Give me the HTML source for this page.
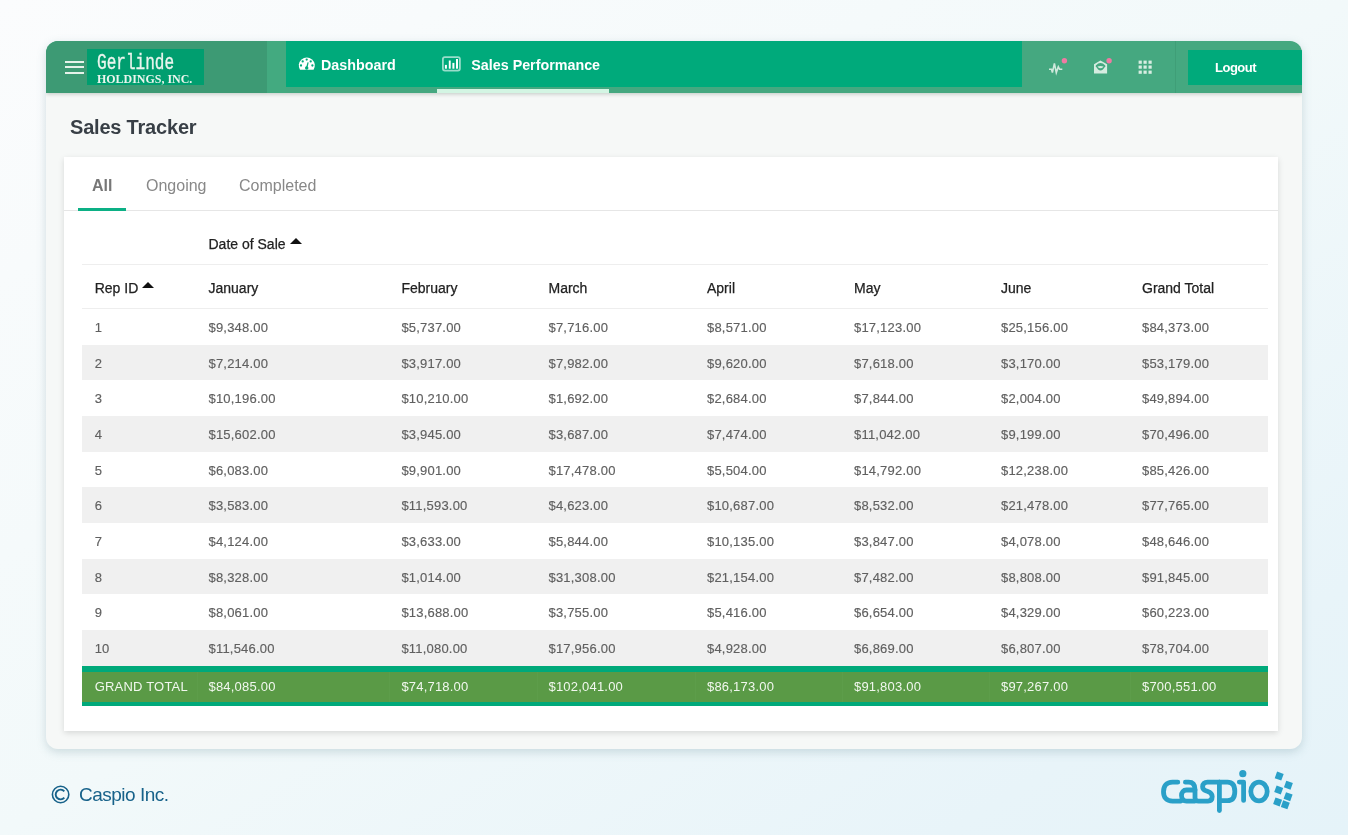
<!DOCTYPE html>
<html><head><meta charset="utf-8">
<style>
*{margin:0;padding:0;box-sizing:border-box}
html,body{width:1348px;height:835px;overflow:hidden}
body{font-family:"Liberation Sans",sans-serif;position:relative;
 background:linear-gradient(to bottom right,#fbfcfd 0%,#f2f9fa 50%,#e8f4f9 85%,#e5f3f9 100%);}
.abs{position:absolute}
#card{position:absolute;left:46px;top:41px;width:1256px;height:708px;background:#f6f8f7;border-radius:12px;
 box-shadow:0 3px 10px rgba(100,140,150,0.28);overflow:hidden}
#hdr{position:absolute;left:0;top:0;width:1256px;height:52px;background:#45a880;box-shadow:0 1px 4px rgba(0,30,15,0.22);z-index:2}
#hleft{position:absolute;left:0;top:0;width:220.5px;height:52px;background:#3d9a74}
#hstrip{position:absolute;left:220.5px;top:0;width:19.5px;height:52px;background:#43aa80}
#nav{position:absolute;left:240px;top:0;width:736px;height:46px;background:#00aa7b}
#logo{position:absolute;left:41px;top:8px;width:117px;height:36px;background:#009e6f}
.burger{position:absolute;left:19px;width:19px;height:2px;background:#e6f2ea}
.navt{position:absolute;color:#fff;font-weight:bold;font-size:14.3px;line-height:16px;white-space:nowrap}
#ul{position:absolute;left:390.5px;top:48px;width:172.5px;height:4px;background:#d3f5e3}
#logout{position:absolute;left:1142px;top:9px;width:114px;height:35px;background:#00aa7b;color:#fff;font-weight:bold;font-size:13px;line-height:35px;padding-left:27px;letter-spacing:-0.5px}
#vdiv{position:absolute;left:1129px;top:0;width:1px;height:52px;background:#3f9e77}
.dot{position:absolute;width:6px;height:6px;border-radius:50%;background:#f07aa5}
#title{position:absolute;left:24px;top:75px;font-size:20px;font-weight:bold;color:#383f46;line-height:23px;white-space:nowrap;letter-spacing:-0.2px}
#inner{position:absolute;left:18px;top:116px;width:1214px;height:574px;background:#fff;box-shadow:0 2px 6px rgba(0,0,0,0.13)}
.tab{position:absolute;font-size:16px;line-height:18px;color:#888;white-space:nowrap}
#tabline{position:absolute;left:0;top:53px;width:1214px;height:1px;background:#e6e6e6}
#tabul{position:absolute;left:14px;top:51px;width:48px;height:3px;background:#0cb085}
.th{position:absolute;font-size:14px;line-height:16px;color:#222;white-space:nowrap;-webkit-text-stroke:0.25px #222}
.td{position:absolute;font-size:13px;line-height:15px;color:#606060;white-space:nowrap;letter-spacing:0.2px;-webkit-text-stroke:0.15px #606060}
.tg{position:absolute;font-size:13px;line-height:15px;color:#f1f7ee;white-space:nowrap;letter-spacing:0.2px}
.hline{position:absolute;height:1px;background:#eeeeee}
.band{position:absolute;background:#f0f0f0}
.gt{position:absolute;height:40px;background:#5a9a46;border-top:6px solid #00a97a;border-bottom:4px solid #00a97a}
.gtdiv{position:absolute;width:1px;height:30px;background:#5d9d4a}
.arrow{position:absolute;width:0;height:0;border-left:6.5px solid transparent;border-right:6.5px solid transparent;border-bottom:6.5px solid #111}
#foot{position:absolute;left:79px;top:783.5px;font-size:19px;line-height:22px;color:#17628a;white-space:nowrap;letter-spacing:-0.5px}
</style></head><body>
<div id="root" style="position:absolute;left:0;top:0;width:1348px;height:835px;will-change:transform">
<div id="card">
 <div id="hdr">
  <div id="hleft"></div>
  <div id="hstrip"></div>
  <div class="burger" style="top:19.6px"></div>
  <div class="burger" style="top:25.1px"></div>
  <div class="burger" style="top:30.8px"></div>
  <div id="logo">
   <div style="position:absolute;left:9.5px;top:4.6px;font-family:'Liberation Mono',monospace;font-size:22px;line-height:20px;color:#eaf5ee;font-weight:normal;-webkit-text-stroke:0.35px #eaf5ee;transform:scaleX(0.73);transform-origin:0 0;white-space:nowrap">Gerlinde</div>
   <div style="position:absolute;left:9.5px;top:23px;font-family:'Liberation Serif',serif;font-size:13px;line-height:14px;color:#eaf5ee;font-weight:bold;transform:scaleX(0.92);transform-origin:0 0;white-space:nowrap">HOLDINGS, INC.</div>
  </div>
  <div id="nav">
   <div class="navt" style="left:35px;top:16px">Dashboard</div>
   <div class="navt" style="left:185.3px;top:16px">Sales Performance</div>
  </div>
  <div id="ul"></div>
  <div id="vdiv"></div>

  <svg style="position:absolute;left:0;top:0" width="1256" height="52" viewBox="46 41 1256 52">
   <!-- dashboard gauge -->
   <g transform="translate(298.8,57.1)">
    <path d="M1.2 12.7 A8 8 0 1 1 14.8 12.7 Z" fill="#fff"/>
    <g fill="#00aa7b">
     <circle cx="7.9" cy="2.5" r="1.15"/><circle cx="3.9" cy="4.3" r="1.15"/><circle cx="11.9" cy="4.3" r="1.15"/>
     <circle cx="2.2" cy="8.4" r="1.15"/><circle cx="13.6" cy="8.4" r="1.15"/>
     <circle cx="7.9" cy="10.9" r="1.75"/>
     <path d="M7.2 10.6 L8.7 5.2 L9.9 5.5 L8.6 11 Z"/>
    </g>
   </g>
   <!-- chart icon -->
   <rect x="442.9" y="57.1" width="17" height="13.5" rx="2" ry="2" fill="none" stroke="#fff" stroke-opacity="0.6" stroke-width="1.8"/>
   <g fill="#fff">
    <rect x="444.9" y="64.9" width="2" height="3.8"/>
    <rect x="448.8" y="60.5" width="1.9" height="8.2"/>
    <rect x="452.4" y="62.9" width="2" height="5.8"/>
    <rect x="456" y="59" width="2" height="9.7"/>
   </g>
   <!-- pulse -->
   <path d="M1049 69.2 L1051.5 69.2 L1052.4 72.6 L1054.4 63.3 L1056.3 72.6 L1058.3 66.8 L1059.5 69.2 L1062.3 69.2" fill="none" stroke="#cfe9dc" stroke-width="1.6" stroke-linejoin="miter" stroke-linecap="butt"/>
   <circle cx="1064.4" cy="60.7" r="2.7" fill="#ef7aa3"/>
   <!-- envelope open -->
   <path d="M1094 64.2 L1100.4 60.4 L1107.1 64.2 L1107.1 73.6 L1094 73.6 Z" fill="#d5ece0"/>
   <path d="M1095.8 65.4 Q1100.5 60.6 1105.3 65.4 L1105.3 66.2 Q1100.5 74.6 1095.8 66.2 Z" fill="#45a880"/>
   <path d="M1097.4 66.4 Q1100.5 65.4 1103.6 66.4 Q1100.5 70.2 1097.4 66.4 Z" fill="#d5ece0"/>
   <circle cx="1109.1" cy="60.7" r="2.7" fill="#ef7aa3"/>
   <!-- grid -->
   <g fill="#d8ede2">
    <rect x="1138.6" y="60.6" width="3.2" height="3.2"/><rect x="1143.5" y="60.6" width="3.2" height="3.2"/><rect x="1148.5" y="60.6" width="3.2" height="3.2"/>
    <rect x="1138.6" y="65.5" width="3.2" height="3.2"/><rect x="1143.5" y="65.5" width="3.2" height="3.2"/><rect x="1148.5" y="65.5" width="3.2" height="3.2"/>
    <rect x="1138.6" y="70.6" width="3.2" height="3.2"/><rect x="1143.5" y="70.6" width="3.2" height="3.2"/><rect x="1148.5" y="70.6" width="3.2" height="3.2"/>
   </g>
  </svg>
  <div id="logout">Logout</div>
 </div>
 <div id="title">Sales Tracker</div>
 <div id="inner">
  <div class="tab" style="left:28px;top:20px;font-weight:bold;color:#777">All</div>
  <div class="tab" style="left:82px;top:20px">Ongoing</div>
  <div class="tab" style="left:175px;top:20px">Completed</div>
  <div id="tabline"></div>
  <div id="tabul"></div>
 </div>
</div>
<div id="tbl" style="position:absolute;left:0;top:0;width:1348px;height:835px">
<div class="th" style="left:208.50px;top:236.13px">Date of Sale</div>
<div class="arrow" style="left:290px;top:238px"></div>
<div class="hline" style="left:82px;top:264px;width:1185.5px"></div>
<div class="th" style="left:94.70px;top:280.23px">Rep ID</div>
<div class="th" style="left:208.50px;top:280.23px">January</div>
<div class="th" style="left:401.40px;top:280.23px">February</div>
<div class="th" style="left:548.50px;top:280.23px">March</div>
<div class="th" style="left:707.00px;top:280.23px">April</div>
<div class="th" style="left:854.00px;top:280.23px">May</div>
<div class="th" style="left:1001.00px;top:280.23px">June</div>
<div class="th" style="left:1142.00px;top:280.23px">Grand Total</div>
<div class="arrow" style="left:142.3px;top:281.9px"></div>
<div class="hline" style="left:82px;top:308px;width:1185.5px"></div>
<div class="td" style="left:94.70px;top:319.84px">1</div>
<div class="td" style="left:208.50px;top:319.84px">$9,348.00</div>
<div class="td" style="left:401.40px;top:319.84px">$5,737.00</div>
<div class="td" style="left:548.50px;top:319.84px">$7,716.00</div>
<div class="td" style="left:707.00px;top:319.84px">$8,571.00</div>
<div class="td" style="left:854.00px;top:319.84px">$17,123.00</div>
<div class="td" style="left:1001.00px;top:319.84px">$25,156.00</div>
<div class="td" style="left:1142.00px;top:319.84px">$84,373.00</div>
<div class="band" style="left:82px;top:344.67px;width:1185.5px;height:35.67px"></div>
<div class="td" style="left:94.70px;top:355.51px">2</div>
<div class="td" style="left:208.50px;top:355.51px">$7,214.00</div>
<div class="td" style="left:401.40px;top:355.51px">$3,917.00</div>
<div class="td" style="left:548.50px;top:355.51px">$7,982.00</div>
<div class="td" style="left:707.00px;top:355.51px">$9,620.00</div>
<div class="td" style="left:854.00px;top:355.51px">$7,618.00</div>
<div class="td" style="left:1001.00px;top:355.51px">$3,170.00</div>
<div class="td" style="left:1142.00px;top:355.51px">$53,179.00</div>
<div class="td" style="left:94.70px;top:391.18px">3</div>
<div class="td" style="left:208.50px;top:391.18px">$10,196.00</div>
<div class="td" style="left:401.40px;top:391.18px">$10,210.00</div>
<div class="td" style="left:548.50px;top:391.18px">$1,692.00</div>
<div class="td" style="left:707.00px;top:391.18px">$2,684.00</div>
<div class="td" style="left:854.00px;top:391.18px">$7,844.00</div>
<div class="td" style="left:1001.00px;top:391.18px">$2,004.00</div>
<div class="td" style="left:1142.00px;top:391.18px">$49,894.00</div>
<div class="band" style="left:82px;top:416.01px;width:1185.5px;height:35.67px"></div>
<div class="td" style="left:94.70px;top:426.85px">4</div>
<div class="td" style="left:208.50px;top:426.85px">$15,602.00</div>
<div class="td" style="left:401.40px;top:426.85px">$3,945.00</div>
<div class="td" style="left:548.50px;top:426.85px">$3,687.00</div>
<div class="td" style="left:707.00px;top:426.85px">$7,474.00</div>
<div class="td" style="left:854.00px;top:426.85px">$11,042.00</div>
<div class="td" style="left:1001.00px;top:426.85px">$9,199.00</div>
<div class="td" style="left:1142.00px;top:426.85px">$70,496.00</div>
<div class="td" style="left:94.70px;top:462.52px">5</div>
<div class="td" style="left:208.50px;top:462.52px">$6,083.00</div>
<div class="td" style="left:401.40px;top:462.52px">$9,901.00</div>
<div class="td" style="left:548.50px;top:462.52px">$17,478.00</div>
<div class="td" style="left:707.00px;top:462.52px">$5,504.00</div>
<div class="td" style="left:854.00px;top:462.52px">$14,792.00</div>
<div class="td" style="left:1001.00px;top:462.52px">$12,238.00</div>
<div class="td" style="left:1142.00px;top:462.52px">$85,426.00</div>
<div class="band" style="left:82px;top:487.35px;width:1185.5px;height:35.67px"></div>
<div class="td" style="left:94.70px;top:498.19px">6</div>
<div class="td" style="left:208.50px;top:498.19px">$3,583.00</div>
<div class="td" style="left:401.40px;top:498.19px">$11,593.00</div>
<div class="td" style="left:548.50px;top:498.19px">$4,623.00</div>
<div class="td" style="left:707.00px;top:498.19px">$10,687.00</div>
<div class="td" style="left:854.00px;top:498.19px">$8,532.00</div>
<div class="td" style="left:1001.00px;top:498.19px">$21,478.00</div>
<div class="td" style="left:1142.00px;top:498.19px">$77,765.00</div>
<div class="td" style="left:94.70px;top:533.86px">7</div>
<div class="td" style="left:208.50px;top:533.86px">$4,124.00</div>
<div class="td" style="left:401.40px;top:533.86px">$3,633.00</div>
<div class="td" style="left:548.50px;top:533.86px">$5,844.00</div>
<div class="td" style="left:707.00px;top:533.86px">$10,135.00</div>
<div class="td" style="left:854.00px;top:533.86px">$3,847.00</div>
<div class="td" style="left:1001.00px;top:533.86px">$4,078.00</div>
<div class="td" style="left:1142.00px;top:533.86px">$48,646.00</div>
<div class="band" style="left:82px;top:558.69px;width:1185.5px;height:35.67px"></div>
<div class="td" style="left:94.70px;top:569.53px">8</div>
<div class="td" style="left:208.50px;top:569.53px">$8,328.00</div>
<div class="td" style="left:401.40px;top:569.53px">$1,014.00</div>
<div class="td" style="left:548.50px;top:569.53px">$31,308.00</div>
<div class="td" style="left:707.00px;top:569.53px">$21,154.00</div>
<div class="td" style="left:854.00px;top:569.53px">$7,482.00</div>
<div class="td" style="left:1001.00px;top:569.53px">$8,808.00</div>
<div class="td" style="left:1142.00px;top:569.53px">$91,845.00</div>
<div class="td" style="left:94.70px;top:605.20px">9</div>
<div class="td" style="left:208.50px;top:605.20px">$8,061.00</div>
<div class="td" style="left:401.40px;top:605.20px">$13,688.00</div>
<div class="td" style="left:548.50px;top:605.20px">$3,755.00</div>
<div class="td" style="left:707.00px;top:605.20px">$5,416.00</div>
<div class="td" style="left:854.00px;top:605.20px">$6,654.00</div>
<div class="td" style="left:1001.00px;top:605.20px">$4,329.00</div>
<div class="td" style="left:1142.00px;top:605.20px">$60,223.00</div>
<div class="band" style="left:82px;top:630.03px;width:1185.5px;height:35.67px"></div>
<div class="td" style="left:94.70px;top:640.87px">10</div>
<div class="td" style="left:208.50px;top:640.87px">$11,546.00</div>
<div class="td" style="left:401.40px;top:640.87px">$11,080.00</div>
<div class="td" style="left:548.50px;top:640.87px">$17,956.00</div>
<div class="td" style="left:707.00px;top:640.87px">$4,928.00</div>
<div class="td" style="left:854.00px;top:640.87px">$6,869.00</div>
<div class="td" style="left:1001.00px;top:640.87px">$6,807.00</div>
<div class="td" style="left:1142.00px;top:640.87px">$78,704.00</div>
<div class="gt" style="left:82px;top:665.70px;width:1185.5px"></div>
<div class="gtdiv" style="left:196.5px;top:671.70px"></div>
<div class="gtdiv" style="left:389.4px;top:671.70px"></div>
<div class="gtdiv" style="left:536.5px;top:671.70px"></div>
<div class="gtdiv" style="left:695.0px;top:671.70px"></div>
<div class="gtdiv" style="left:842.0px;top:671.70px"></div>
<div class="gtdiv" style="left:989.0px;top:671.70px"></div>
<div class="gtdiv" style="left:1130.0px;top:671.70px"></div>
<div class="tg" style="left:94.70px;top:679.13px">GRAND TOTAL</div>
<div class="tg" style="left:208.50px;top:679.13px">$84,085.00</div>
<div class="tg" style="left:401.40px;top:679.13px">$74,718.00</div>
<div class="tg" style="left:548.50px;top:679.13px">$102,041.00</div>
<div class="tg" style="left:707.00px;top:679.13px">$86,173.00</div>
<div class="tg" style="left:854.00px;top:679.13px">$91,803.00</div>
<div class="tg" style="left:1001.00px;top:679.13px">$97,267.00</div>
<div class="tg" style="left:1142.00px;top:679.13px">$700,551.00</div>
</div>
<svg style="position:absolute;left:0;top:0" width="1348" height="835">
 <circle cx="60.6" cy="794.5" r="8.2" fill="none" stroke="#17628a" stroke-width="1.6"/>
 <path d="M64.3 791.3 A4.9 4.9 0 1 0 64.3 797.7" fill="none" stroke="#17628a" stroke-width="1.9"/>
 <g fill="none" stroke="#2aa0c8" stroke-width="4.8" stroke-linecap="round" stroke-linejoin="round">
  <path d="M1177.8 782.2 L1172.5 782.2 C1166.3 782.2 1163.5 786.2 1163.5 791.7 C1163.5 797.3 1166.3 801.1 1172.5 801.1 L1181 801.1"/>
  <path d="M1185.4 782.2 L1188.5 782.2 C1193 782.2 1195 784.8 1195 789.5 L1195 798 C1195 800 1196.5 801.1 1198.5 801.1 L1208 801.1 C1211 801.1 1212.2 799.3 1212.2 796.6 C1212.2 793.6 1210.3 792.3 1207.3 791.3 L1205.8 790.8 C1203.5 790 1202.6 788.8 1202.6 786.8 C1202.6 783.8 1204.6 782.2 1207.5 782.2 L1219.4 782.2"/>
  <path d="M1195 790 L1186.5 790 C1183.4 790 1181.5 792.3 1181.5 795.6 C1181.5 799 1183.5 801.1 1186.5 801.1 L1195 801.1"/>
  <path d="M1219.4 782.2 L1219.4 810.5"/>
  <path d="M1219.4 782.2 L1227.5 782.2 C1232.5 782.2 1234.8 785.8 1234.8 791.5 C1234.8 797.2 1232.5 800.7 1227.5 800.7 L1219.4 800.7"/>
  <path d="M1239.3 782.1 L1243.6 782.1 L1243.6 800.4"/>
  <ellipse cx="1259" cy="791.5" rx="8.2" ry="9.4"/>
 </g>
 <circle cx="1242.8" cy="773.7" r="3.6" fill="#2aa0c8"/>
 <g fill="#2aa0c8">
  <rect x="-3.5" y="-3.5" width="7" height="7" transform="translate(1279.2,776.1) rotate(20)"/>
  <rect x="-3.5" y="-3.5" width="7" height="7" transform="translate(1288.4,785.2) rotate(20)"/>
  <rect x="-3.5" y="-3.5" width="7" height="7" transform="translate(1278.7,790) rotate(20)"/>
  <rect x="-3.5" y="-3.5" width="7" height="7" transform="translate(1288.1,796.7) rotate(20)"/>
  <rect x="-3.5" y="-3.5" width="7" height="7" transform="translate(1277.6,801.9) rotate(20)"/>
  <rect x="-3.5" y="-3.5" width="7" height="7" transform="translate(1285.3,804.8) rotate(20)"/>
 </g>
</svg>
<div id="foot">Caspio Inc.</div>
</div>
</body></html>
